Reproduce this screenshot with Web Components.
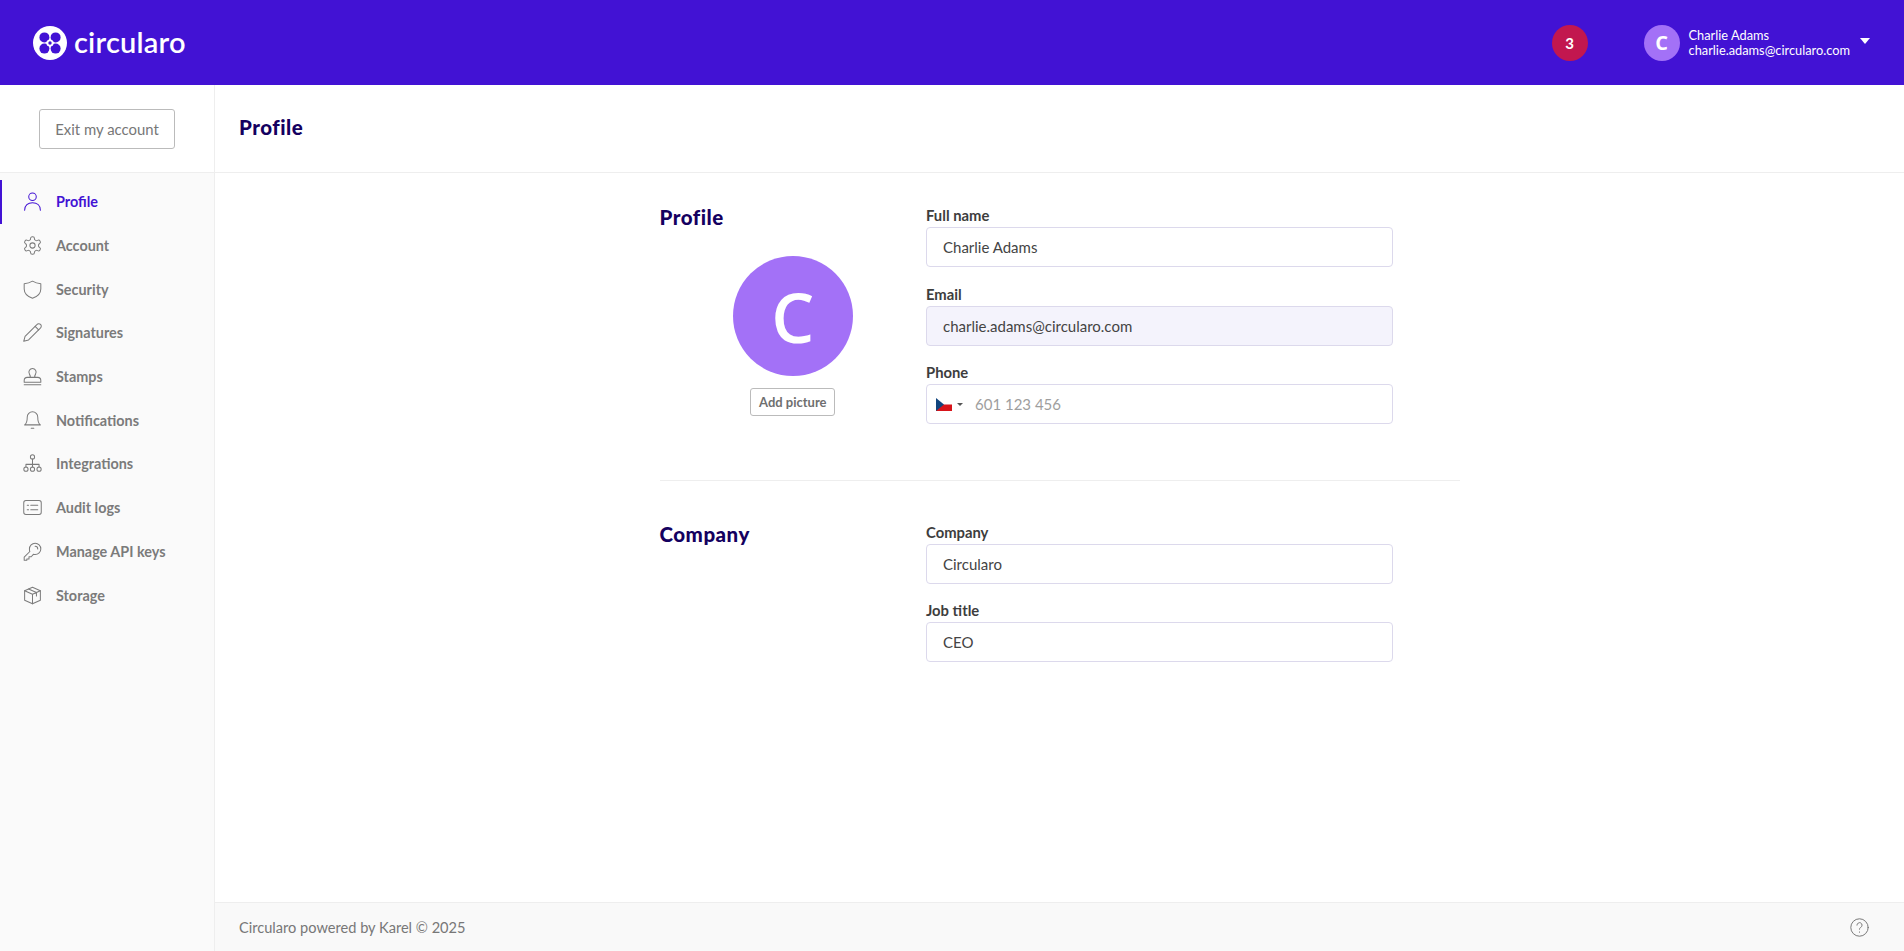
<!DOCTYPE html>
<html lang="en">
<head>
<meta charset="utf-8">
<title>Circularo - Profile</title>
<style>
  html, body { margin: 0; height: 100%; }
  body { font-family: Lato, "Noto Sans", sans-serif; overflow: hidden; }
</style>
</head>
<body>
<app-shell>
  <app-header slot="header" name="Charlie Adams" email="charlie.adams@circularo.com" count="3"></app-header>
  <app-sidebar slot="sidebar">
    <nav-item icon="user" active>Profile</nav-item>
    <nav-item icon="gear">Account</nav-item>
    <nav-item icon="shield">Security</nav-item>
    <nav-item icon="pencil">Signatures</nav-item>
    <nav-item icon="stamp">Stamps</nav-item>
    <nav-item icon="bell">Notifications</nav-item>
    <nav-item icon="tree">Integrations</nav-item>
    <nav-item icon="list">Audit logs</nav-item>
    <nav-item icon="key">Manage API keys</nav-item>
    <nav-item icon="box">Storage</nav-item>
  </app-sidebar>
  <page-title slot="title">Profile</page-title>

  <form-section heading="Profile" divided>
    <avatar-picker slot="aside" letter="C"></avatar-picker>
    <form-field label="Full name" value="Charlie Adams"></form-field>
    <form-field label="Email" value="charlie.adams@circularo.com" disabled></form-field>
    <form-field label="Phone" placeholder="601 123 456" phone></form-field>
  </form-section>

  <form-section heading="Company">
    <form-field label="Company" value="Circularo"></form-field>
    <form-field label="Job title" value="CEO"></form-field>
  </form-section>

  <app-footer slot="footer">Circularo powered by Karel © 2025</app-footer>
</app-shell>

<script>
// ── Icons ─────────────────────────────────────────────────────────────────────

const ICONS = {
  user: '<circle cx="12" cy="6.5" r="4.3"/><path d="M3 22c0-5.500 3.800-8.500 9-8.500s9 3 9 8.500"/>',
  gear: '<path d="M12.220 2h-.44a2 2 0 0 0-2 2v.18a2 2 0 0 1-1 1.730l-.43.25a2 2 0 0 1-2 0l-.15-.08a2 2 0 0 0-2.730.73l-.22.38a2 2 0 0 0 .73 2.730l.15.1a2 2 0 0 1 1 1.720v.51a2 2 0 0 1-1 1.740l-.15.09a2 2 0 0 0-.73 2.730l.22.38a2 2 0 0 0 2.730.73l.15-.08a2 2 0 0 1 2 0l.43.25a2 2 0 0 1 1 1.730V20a2 2 0 0 0 2 2h.44a2 2 0 0 0 2-2v-.18a2 2 0 0 1 1-1.730l.43-.25a2 2 0 0 1 2 0l.15.08a2 2 0 0 0 2.730-.73l.22-.39a2 2 0 0 0-.73-2.730l-.15-.08a2 2 0 0 1-1-1.740v-.5a2 2 0 0 1 1-1.740l.15-.09a2 2 0 0 0 .73-2.730l-.22-.38a2 2 0 0 0-2.730-.73l-.15.08a2 2 0 0 1-2 0l-.43-.25a2 2 0 0 1-1-1.730V4a2 2 0 0 0-2-2z"/><circle cx="12" cy="12" r="3"/>',
  shield: '<path d="M12 2.500c3 1.800 5.800 2.600 9.500 2.800v6c0 5-3.800 8.600-9.500 10.700-5.700-2.100-9.500-5.700-9.500-10.700v-6c3.700-.2 6.500-1 9.500-2.800z"/>',
  pencil: '<path d="M17 3a2.850 2.830 0 1 1 4 4L7.500 20.500 2 22l1.500-5.500Z"/><path d="m15 5 4 4"/>',
  stamp: '<path d="M9.300 13c.5-1.600-.1-2.700-.9-4A4.100 4.100 0 1 1 15.600 9c-.8 1.300-1.400 2.400-.9 4"/><path d="M2.500 18.500v-1.800c0-2.100 1.500-3.700 3.500-3.700h12c2 0 3.500 1.600 3.500 3.700v1.800z"/><path d="M2.500 21.500h19"/>',
  bell: '<path d="M6 8a6 6 0 0 1 12 0c0 7 3 9 3 9H3s3-2 3-9"/><path d="M10.500 20.800h3"/>',
  tree: '<circle cx="12" cy="4.500" r="2.400"/><path d="M12 7v9M4.500 16v-3h15v3"/><circle cx="4.500" cy="18.500" r="2.400"/><circle cx="12" cy="18.500" r="2.400"/><circle cx="19.500" cy="18.500" r="2.400"/>',
  list: '<rect x="2" y="4" width="20" height="16" rx="2.500"/><path d="M6 9.500h1.500M10 9.500h8M6 14.500h1.500M10 14.500h8"/>',
  key: '<path d="M15 2.500a6.500 6.500 0 0 1 0 13c-.7 0-1.400-.1-2-.3L10.500 18H8v2.500H5.500V22H2.500v-3.500L9 12c-.3-.6-.5-1.500-.5-3A6.500 6.500 0 0 1 15 2.500z"/><path d="M15 6a3 3 0 0 1 3 3"/>',
  box: '<path d="M12 2.500l9 4v11l-9 4-9-4v-11z"/><path d="M3 6.500l9 4 9-4M12 10.500v11M7.500 4.500l9 4v4"/>',
  help: '<circle cx="12" cy="12" r="11"/><path d="M8.800 9a3.200 3.200 0 1 1 4.800 2.800c-1 .6-1.600 1.200-1.600 2.400M12 17.600v.4"/>',
};

function iconSvg(name, size, strokeWidth) {
  return `<svg width="${size}" height="${size}" viewBox="0 0 24 24" fill="none" stroke="currentColor"
    stroke-width="${strokeWidth}" stroke-linecap="round" stroke-linejoin="round">${ICONS[name]}</svg>`;
}

// ── Shell ─────────────────────────────────────────────────────────────────────

class AppShell extends HTMLElement {
  constructor() {
    super();
    this.attachShadow({ mode: 'open' }).innerHTML = `
      <style>
        :host { display: grid; grid-template: 85px 1fr / 215px 1fr; height: 951px; background: #fff; }
        .top { grid-column: 1 / 3; }
        .main { display: flex; flex-direction: column; min-width: 0; }
        .body { flex: 1; display: flex; flex-direction: column; align-items: center; }
        .col { width: 800px; }
      </style>
      <div class="top"><slot name="header"></slot></div>
      <slot name="sidebar"></slot>
      <div class="main">
        <slot name="title"></slot>
        <div class="body"><div class="col"><slot></slot></div></div>
        <slot name="footer"></slot>
      </div>`;
  }
}

class AppHeader extends HTMLElement {
  constructor() {
    super();
    this.attachShadow({ mode: 'open' });
  }

  connectedCallback() {
    const name  = this.getAttribute('name');
    const email = this.getAttribute('email');
    const count = this.getAttribute('count');
    this.shadowRoot.innerHTML = `
      <style>
        :host { display: flex; align-items: center; height: 85px; background: #4212d4; color: #fff; padding: 0 34px 0 33px; box-sizing: border-box; }
        .logo { display: flex; align-items: center; gap: 7px; }
        .word { font: 600 29px/34px Lato, sans-serif; letter-spacing: .2px; margin-top: -1px; }
        .badge { width: 36px; height: 36px; border-radius: 50%; background: #c2174f; margin-left: auto;
          display: flex; align-items: center; justify-content: center; font: 700 15px Lato, sans-serif; font-variant-numeric: lining-nums; }
        .avatar { width: 36px; height: 36px; border-radius: 50%; background: #a371f7; margin-left: 56px;
          display: flex; align-items: center; justify-content: center; font: 700 20px "Open Sans", sans-serif; }
        .who { margin-left: 9px; font: 12.800px/15px Lato, sans-serif; }
        .caret { width: 0; height: 0; border: 5px solid transparent; border-top: 6px solid #fff; border-bottom: 0; margin-left: 10px; margin-top: -3px; }
      </style>
      <div class="logo">
        <svg width="34" height="34" viewBox="0 0 34 34">
          <circle cx="17" cy="17" r="17" fill="#fff"/>
          <g fill="#4212d4">
            <circle cx="11.400" cy="11.400" r="5"/><circle cx="22.600" cy="11.400" r="5"/>
            <circle cx="11.400" cy="22.600" r="5"/><circle cx="22.600" cy="22.600" r="5"/>
          </g>
          <circle cx="17" cy="17" r="3.600" fill="#fff"/>
          <circle cx="17" cy="17" r="1.700" fill="#4212d4"/>
        </svg>
        <span class="word">circularo</span>
      </div>
      <div class="badge">${count}</div>
      <div class="avatar">${name[0]}</div>
      <div class="who"><div>${name}</div><div>${email}</div></div>
      <div class="caret"></div>`;
  }
}

// ── Sidebar ───────────────────────────────────────────────────────────────────

class AppSidebar extends HTMLElement {
  constructor() {
    super();
    this.attachShadow({ mode: 'open' }).innerHTML = `
      <style>
        :host { display: flex; flex-direction: column; background: #fafafa; border-right: 1px solid #eee; box-sizing: border-box; }
        .top { height: 88px; box-sizing: border-box; background: #fff; border-bottom: 1px solid #eee; display: flex; align-items: center; justify-content: center; padding-top: 1px; }
        button { width: 136px; height: 40px; background: #fff; border: 1px solid #bbb; border-radius: 3px; color: #777; font: 14.900px Lato, sans-serif; padding: 0; }
        nav { padding-top: 7px; }
      </style>
      <div class="top"><button type="button">Exit my account</button></div>
      <nav><slot></slot></nav>`;
  }
}

class NavItem extends HTMLElement {
  constructor() {
    super();
    this.attachShadow({ mode: 'open' });
  }

  connectedCallback() {
    this.shadowRoot.innerHTML = `
      <style>
        :host { display: flex; align-items: center; height: 43.700px; padding-left: 22px; color: #7b7b7b; font: 700 14.400px Lato, sans-serif; }
        :host([active]) { color: #4212d4; box-shadow: inset 2px 0 0 #4212d4; }
        svg { display: block; margin-right: 13px; flex: none; }
      </style>
      ${iconSvg(this.getAttribute('icon'), 21, 1.150)}
      <span><slot></slot></span>`;
  }
}

// ── Main column ───────────────────────────────────────────────────────────────

class PageTitle extends HTMLElement {
  constructor() {
    super();
    this.attachShadow({ mode: 'open' }).innerHTML = `
      <style>
        :host { display: flex; align-items: center; height: 88px; box-sizing: border-box; border-bottom: 1px solid #eee; padding: 0 0 3px 24px; color: #14005f; font: 900 20.500px Lato, sans-serif; letter-spacing: .5px; }
      </style>
      <slot></slot>`;
  }
}

class FormSection extends HTMLElement {
  constructor() {
    super();
    this.attachShadow({ mode: 'open' });
  }

  connectedCallback() {
    this.shadowRoot.innerHTML = `
      <style>
        :host { display: grid; grid-template-columns: 266.500px 466.500px; padding-top: 35px; }
        :host([divided]) { padding-bottom: 56px; border-bottom: 1px solid #eee; margin-bottom: 8.400px; }
        h2 { margin: -3px 0 27px; color: #14005f; font: 900 20.500px/24px Lato, sans-serif; letter-spacing: .5px; }
        .fields { display: flex; flex-direction: column; gap: 19.600px; }
      </style>
      <div>
        <h2>${this.getAttribute('heading')}</h2>
        <slot name="aside"></slot>
      </div>
      <div class="fields"><slot></slot></div>`;
  }
}

class AvatarPicker extends HTMLElement {
  constructor() {
    super();
    this.attachShadow({ mode: 'open' });
  }

  connectedCallback() {
    this.shadowRoot.innerHTML = `
      <style>
        :host { display: flex; flex-direction: column; align-items: center; gap: 12px; }
        .circle { width: 120px; height: 120px; border-radius: 50%; background: #a371f7; color: #fff;
          display: flex; align-items: center; justify-content: center; font: 600 68px "Open Sans", sans-serif; }
        button { width: 85px; height: 28px; margin-left: -1px; background: #fff; border: 1px solid #bbb; border-radius: 3px; color: #6f6f6f; font: 700 13px Lato, sans-serif; padding: 0 0 0 1px; }
      </style>
      <div class="circle">${this.getAttribute('letter')}</div>
      <button type="button">Add picture</button>`;
  }
}

class FormField extends HTMLElement {
  constructor() {
    super();
    this.attachShadow({ mode: 'open' });
  }

  connectedCallback() {
    const value = this.getAttribute('value');
    const placeholder = this.getAttribute('placeholder');
    const flag = this.hasAttribute('phone') ? `
      <svg class="flag" width="16" height="13" viewBox="0 0 16 13">
        <rect width="16" height="6.500" fill="#fff"/><rect y="6.500" width="16" height="6.500" fill="#d7141a"/>
        <path d="M0 0l8 6.500L0 13z" fill="#11457e"/>
      </svg>
      <span class="arrow"></span>` : '';
    this.shadowRoot.innerHTML = `
      <style>
        :host { display: block; }
        label { display: block; height: 19px; color: #3d3d3d; font: 700 14.800px/15px Lato, sans-serif; }
        .box { height: 40px; box-sizing: border-box; display: flex; align-items: center; padding: 0 16px; border: 1px solid #dcd9ec; border-radius: 4px; background: #fff; color: #444; font: 15px Lato, sans-serif; }
        :host([disabled]) .box { background: #f4f3fc; }
        :host([phone]) .box { padding-left: 9px; }
        .flag { display: block; flex: none; }
        .arrow { width: 0; height: 0; border: 3px solid transparent; border-top: 3px solid #555; border-bottom: 0; margin: 0 12px 0 5px; }
        .ph { color: #9e9e9e; }
      </style>
      <label>${this.getAttribute('label')}</label>
      <div class="box">${flag}<span class="${value ? '' : 'ph'}">${value ?? placeholder}</span></div>`;
  }
}

class AppFooter extends HTMLElement {
  constructor() {
    super();
    this.attachShadow({ mode: 'open' }).innerHTML = `
      <style>
        :host { display: flex; align-items: center; justify-content: space-between; height: 49px; box-sizing: border-box; padding: 0 35px 0 24px; background: #f9f9f9; border-top: 1px solid #eee; color: #777; font: 14.600px Lato, sans-serif; }
        svg { display: block; }
      </style>
      <span><slot></slot></span>
      ${iconSvg('help', 19, 1.250)}`;
  }
}

// ── Registration ──────────────────────────────────────────────────────────────

customElements.define('app-shell', AppShell);
customElements.define('app-header', AppHeader);
customElements.define('app-sidebar', AppSidebar);
customElements.define('nav-item', NavItem);
customElements.define('page-title', PageTitle);
customElements.define('form-section', FormSection);
customElements.define('avatar-picker', AvatarPicker);
customElements.define('form-field', FormField);
customElements.define('app-footer', AppFooter);
</script>
</body>
</html>
